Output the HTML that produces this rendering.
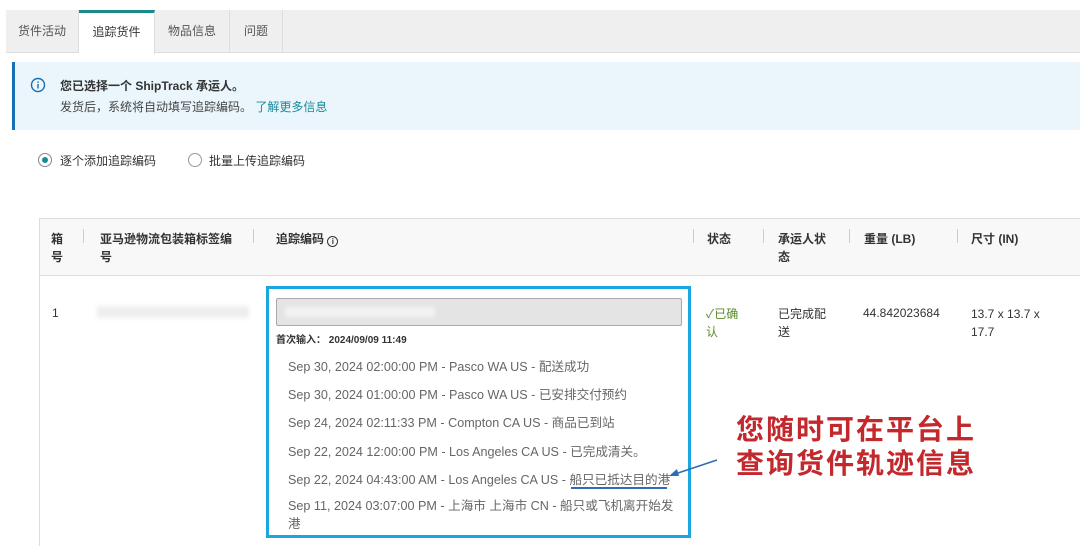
<!DOCTYPE html>
<html><head><meta charset="utf-8"><style>
*{margin:0;padding:0;box-sizing:border-box}
body{width:1080px;height:546px;overflow:hidden;background:#fff;font-family:"Liberation Sans","Noto Sans CJK SC",sans-serif;color:#333;font-size:12px;position:relative}
.a{position:absolute;white-space:nowrap}
.tabbar{position:absolute;left:6px;top:10px;width:1074px;height:43px;background:#efefef;border-bottom:1px solid #ddd}
.tab{position:absolute;top:0;height:43px;line-height:42px;text-align:center;color:#555;border-right:1px solid #ddd}
.info{position:absolute;left:12px;top:62px;width:1068px;height:68px;background:#eaf6fb;border-left:3px solid #1b6fb3}
.th{position:absolute;font-weight:bold;color:#333;line-height:18px}
.sep{position:absolute;top:229px;width:1px;height:14px;background:#ccc}
.ev{position:absolute;left:288px;color:#666;font-size:12.6px;white-space:nowrap}
</style></head><body>
<div class="tabbar">
<div class="tab" style="left:0;width:73px">货件活动</div>
<div class="tab" style="left:73px;width:76px;background:#fff;color:#333;border-top:3px solid #1a8a8a;line-height:38px;height:44px">追踪货件</div>
<div class="tab" style="left:149px;width:75px">物品信息</div>
<div class="tab" style="left:224px;width:53px">问题</div>
</div>
<div class="info"></div>
<svg class="a" style="left:30px;top:77px" width="16" height="16" viewBox="0 0 16 16"><circle cx="8" cy="8" r="6.5" fill="none" stroke="#1b6fb3" stroke-width="1.4"/><rect x="7.3" y="7" width="1.4" height="4.5" fill="#1b6fb3"/><rect x="7.3" y="4.5" width="1.4" height="1.4" fill="#1b6fb3"/></svg>
<div class="a" style="left:60px;top:77px;font-weight:bold;color:#333">您已选择一个 ShipTrack 承运人。</div>
<div class="a" style="left:60px;top:98px;color:#444">发货后，系统将自动填写追踪编码。 <span style="color:#1a8a9a">了解更多信息</span></div>
<div class="a" style="left:38px;top:153px;width:14px;height:14px;border:1px solid #888;border-radius:50%"><div style="position:absolute;left:3px;top:3px;width:6px;height:6px;border-radius:50%;background:#1a8a9a"></div></div>
<div class="a" style="left:60px;top:152px">逐个添加追踪编码</div>
<div class="a" style="left:188px;top:153px;width:14px;height:14px;border:1px solid #999;border-radius:50%"></div>
<div class="a" style="left:209px;top:152px">批量上传追踪编码</div>
<div class="a" style="left:39px;top:218px;width:1041px;height:58px;background:#f8f8f8;border-top:1px solid #ddd;border-bottom:1px solid #ddd;border-left:1px solid #ddd"></div>
<div class="a" style="left:39px;top:276px;width:1px;height:270px;background:#ddd"></div>
<div class="th" style="left:51px;top:230px">箱<br>号</div>
<div class="sep" style="left:83px"></div>
<div class="th" style="left:100px;top:230px">亚马逊物流包装箱标签编<br>号</div>
<div class="sep" style="left:253px"></div>
<div class="th" style="left:276px;top:230px">追踪编码 <span style="display:inline-block;width:11px;height:11px;border:1px solid #333;border-radius:50%;font-size:8px;line-height:9px;text-align:center;vertical-align:-1px">i</span></div>
<div class="sep" style="left:693px"></div>
<div class="th" style="left:707px;top:230px">状态</div>
<div class="sep" style="left:763px"></div>
<div class="th" style="left:778px;top:230px">承运人状<br>态</div>
<div class="sep" style="left:849px"></div>
<div class="th" style="left:864px;top:230px">重量 (LB)</div>
<div class="sep" style="left:957px"></div>
<div class="th" style="left:971px;top:230px">尺寸 (IN)</div>
<div class="a" style="left:52px;top:306px">1</div>
<div class="a" style="left:97px;top:306px;width:152px;height:12px;background:#eee;filter:blur(2px)"></div>
<div class="a" style="left:706px;top:305px;color:#5a8a2a;line-height:18px">✓已确<br>认</div>
<div class="a" style="left:778px;top:305px;line-height:18px">已完成配<br>送</div>
<div class="a" style="left:863px;top:306px">44.842023684</div>
<div class="a" style="left:971px;top:305px;line-height:18px">13.7 x 13.7 x<br>17.7</div>
<div class="a" style="left:266px;top:286px;width:425px;height:252px;border:3px solid #1aa7e0"></div>
<div class="a" style="left:276px;top:298px;width:406px;height:28px;background:#e4e4e4;border:1px solid #aaa;border-radius:2px"><div style="position:absolute;left:8px;top:8px;width:150px;height:10px;background:#f2f2f2;filter:blur(2px)"></div></div>
<div class="a" style="left:276px;top:331px;font-size:10px;font-weight:bold;color:#333">首次输入： 2024/09/09 11:49</div>
<div class="ev" style="top:356px">Sep 30, 2024 02:00:00 PM - Pasco WA US - 配送成功</div>
<div class="ev" style="top:384px">Sep 30, 2024 01:00:00 PM - Pasco WA US - 已安排交付预约</div>
<div class="ev" style="top:412px">Sep 24, 2024 02:11:33 PM - Compton CA US - 商品已到站</div>
<div class="ev" style="top:441px">Sep 22, 2024 12:00:00 PM - Los Angeles CA US - 已完成清关。</div>
<div class="ev" style="top:469px">Sep 22, 2024 04:43:00 AM - Los Angeles CA US - 船只已抵达目的港</div>
<div class="a" style="left:571px;top:487px;width:96px;height:2px;background:#2f6cb8"></div>
<div class="ev" style="top:497px;line-height:18px">Sep 11, 2024 03:07:00 PM - 上海市 上海市 CN - 船只或飞机离开始发<br>港</div>
<svg class="a" style="left:665px;top:455px" width="55" height="25"><line x1="52" y1="5" x2="10" y2="19" stroke="#2f6cb8" stroke-width="1.6"/><polygon points="4,21 12,14 14,21" fill="#2f6cb8"/></svg>
<div class="a" style="left:736px;top:413px;font-size:28px;font-weight:bold;color:#c3282d;line-height:34px;letter-spacing:2px">您随时可在平台上<br>查询货件轨迹信息</div>
</body></html>
